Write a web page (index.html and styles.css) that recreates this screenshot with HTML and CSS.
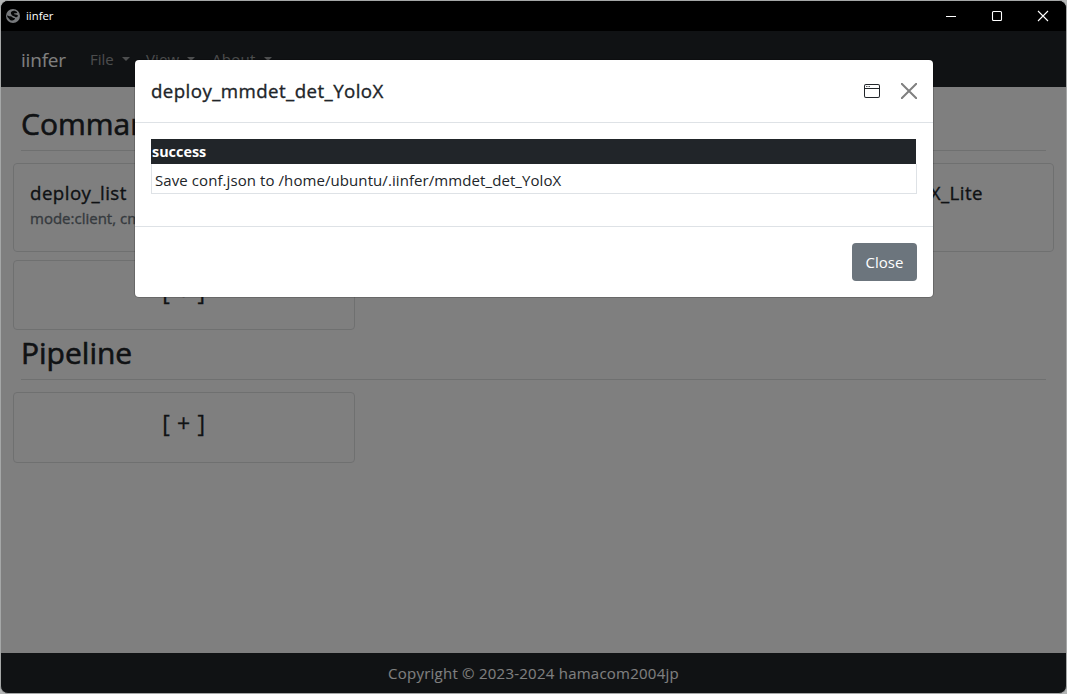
FILE: index.html
```html
<!DOCTYPE html>
<html lang="en">
<head>
<meta charset="utf-8">
<title>iinfer</title>
<link rel="stylesheet" href="styles.css">
</head>
<body>
<div class="window">
  <header class="titlebar">
    <svg class="app-icon" width="14" height="14" viewBox="0 0 14 14"><circle cx="7" cy="7" r="7" fill="#77797c"/><path d="M1.2 6.2C2.6 7.3 4 7 5.4 7.6S6.6 9.2 8.2 9 8.8 10.6 7.2 11.2 4.4 11.6 3.4 10.2 1 8.6 1.2 6.2ZM5.6 2.4C7.4 1.3 10 1.8 11 3.3S9 3.7 8.2 4.6 10 5.8 11.4 6 11 9 9.6 8.2 6 7 5.4 5.6 4.4 3.2 5.6 2.4Z" fill="#050607"/></svg>
    <span class="app-name">iinfer</span>
    <div class="controls">
      <svg width="12" height="12" viewBox="0 0 12 12"><path d="M1 6.5H11"/></svg>
      <svg width="12" height="12" viewBox="0 0 12 12"><rect x="1.5" y="1.5" width="9" height="9" rx="1"/></svg>
      <svg width="12" height="12" viewBox="0 0 12 12"><path d="M1 1L11 11M11 1L1 11"/></svg>
    </div>
  </header>
  <div class="page">
    <nav class="navbar">
      <span class="brand">iinfer</span>
      <span class="nav-link file">File</span>
      <span class="nav-link view">View</span>
      <span class="nav-link about">About</span>
    </nav>
    <main class="content">
      <h2 class="heading">Command</h2>
      <div class="cards">
        <div class="card">
          <h5 class="card-title">deploy_list</h5>
          <h6 class="card-subtitle">mode:client, cmd</h6>
        </div>
        <div class="card"></div>
        <div class="card">
          <h5 class="card-title lite">YoloX_Lite</h5>
        </div>
        <div class="card add">[ + ]</div>
      </div>
      <h2 class="heading pipeline">Pipeline</h2>
      <div class="cards">
        <div class="card add tall">[ + ]</div>
      </div>
    </main>
    <footer class="footer"><span class="copyright">Copyright © 2023-2024 hamacom2004jp</span></footer>
    <div class="backdrop">
      <section class="modal">
        <div class="modal-header">
          <h5 class="modal-title">deploy_mmdet_det_YoloX</h5>
          <svg class="window-icon" width="16" height="16" viewBox="0 0 16 16" fill="#212529"><path d="M2.5 4a.5.5 0 1 0 0-1 .5.5 0 0 0 0 1m2-.5a.5.5 0 1 1-1 0 .5.5 0 0 1 1 0m1 .5a.5.5 0 1 0 0-1 .5.5 0 0 0 0 1"/><path d="M2 1a2 2 0 0 0-2 2v10a2 2 0 0 0 2 2h12a2 2 0 0 0 2-2V3a2 2 0 0 0-2-2zm13 2v2H1V3a1 1 0 0 1 1-1h12a1 1 0 0 1 1 1M2 14a1 1 0 0 1-1-1V6h14v7a1 1 0 0 1-1 1z"/></svg>
          <svg class="close-icon" width="16" height="16" viewBox="0 0 16 16"><path d="M.7.7L15.3 15.3M15.3.7L.7 15.3"/></svg>
        </div>
        <div class="modal-body">
          <div class="result">
            <div class="result-key">success</div>
            <div class="result-value">Save conf.json to /home/ubuntu/.iinfer/mmdet_det_YoloX</div>
          </div>
        </div>
        <div class="modal-footer"><button class="close-button">Close</button></div>
      </section>
    </div>
  </div>
</div>
</body>
</html>
```
FILE: styles.css
```css
* { box-sizing: border-box; }
body {
  margin: 0;
  height: 694px;
  overflow: hidden;
  background: #b4b6b6;
  color: #212529;
  font: 15px/24px "Open Sans", "Noto Sans", sans-serif;
}
h2, h5, h6 { margin: 0; font-weight: 500; -webkit-text-stroke: .35px currentColor; }
.window {
  display: flex;
  flex-direction: column;
  width: 1067px;
  height: 694px;
  border: 1px solid #a5a7a7;
  border-radius: 8px;
  overflow: hidden;
  background: #000;
}
.titlebar {
  display: flex;
  align-items: center;
  height: 30px;
  padding: 0 17px 0 5px;
  background: #000;
  color: #fff;
  font-size: 11.3px;
}
.app-name { margin-left: 6px; }
.controls { display: flex; gap: 34px; margin-left: auto; }
.controls svg { display: block; fill: none; stroke: #fff; stroke-width: 1.1; }
.page { position: relative; display: flex; flex: 1; flex-direction: column; background: #fff; }
.navbar {
  display: flex;
  align-items: center;
  height: 56px;
  padding-left: 20px;
  background: #212529;
  color: rgba(255, 255, 255, .55);
}
.brand { width: 69px; padding-top: 1px; color: #fff; font-size: 19px; letter-spacing: -.2px; }
.nav-link { display: flex; align-items: center; }
.nav-link::after {
  content: "";
  margin-left: 8px;
  border: 4px solid transparent;
  border-top-color: currentColor;
  border-bottom: 0;
}
.file { width: 56px; }
.view { width: 66px; letter-spacing: .1px; }
.about { letter-spacing: .3px; }
.content { flex: 1; padding: 0 12px; }
.heading {
  height: 64px;
  margin: 0 8px 12px;
  padding-top: 18px;
  border-bottom: 1px solid #dfe0e1;
  font-size: 30px;
  line-height: 38px;
  -webkit-text-stroke-width: .6px;
}
.pipeline { height: 50px; padding-top: 4px; }
.cards { display: grid; grid-template-columns: repeat(3, 342px); gap: 8px 7.5px; }
.card { height: 89px; padding: 17px 16px; border: 1px solid #dee0e1; border-radius: 4px; }
.card-title { font-size: 18.7px; line-height: 24px; letter-spacing: .45px; }
.lite { padding-right: 54px; text-align: right; }
.card-subtitle { margin-top: 1px; color: #6c757d; font-size: 15px; line-height: 24px; white-space: nowrap; }
.add {
  height: 70px;
  padding: 14px 0;
  text-align: center;
  font-size: 23px;
  line-height: 32px;
  letter-spacing: .7px;
  -webkit-text-stroke: .3px currentColor;
}
.tall { height: 71px; }
.footer {
  display: flex;
  justify-content: center;
  align-items: center;
  height: 40px;
  background: #212529;
  color: #fff;
  letter-spacing: .24px;
}
.backdrop {
  position: absolute;
  inset: 0;
  padding: 29px 0 0 134px;
  background: rgba(0, 0, 0, .5);
}
.modal {
  width: 798px;
  height: 237px;
  border-radius: 4px;
  background: #fff;
  box-shadow: 0 0 0 1px rgba(0, 0, 0, .18);
}
.modal-header {
  display: flex;
  align-items: center;
  height: 63px;
  padding: 0 16px;
  border-bottom: 1px solid #dee2e6;
}
.modal-title { margin-right: auto; font-size: 18.7px; line-height: 30px; letter-spacing: .42px; }
.window-icon { margin-right: 21px; }
.close-icon { fill: none; stroke: #808080; stroke-width: 2; stroke-linecap: round; }
.modal-body { height: 104px; padding: 16px; border-bottom: 1px solid #dee2e6; }
.result { width: 766px; }
.result-key {
  width: 765px;
  height: 25px;
  padding: 1px 0 0 1px;
  background: #212529;
  color: #fff;
  font-size: 14.4px;
  font-weight: 700;
}
.result-value {
  height: 30px;
  padding: 4px 3px 0;
  border: 1px solid #dee2e6;
  border-top: 0;
  letter-spacing: .08px;
}
.modal-footer { display: flex; justify-content: flex-end; padding: 16px; }
.close-button {
  width: 65px;
  height: 38px;
  padding: 0;
  border: 0;
  border-radius: 4px;
  background: #6c757d;
  color: #fff;
  font: inherit;
}
```
